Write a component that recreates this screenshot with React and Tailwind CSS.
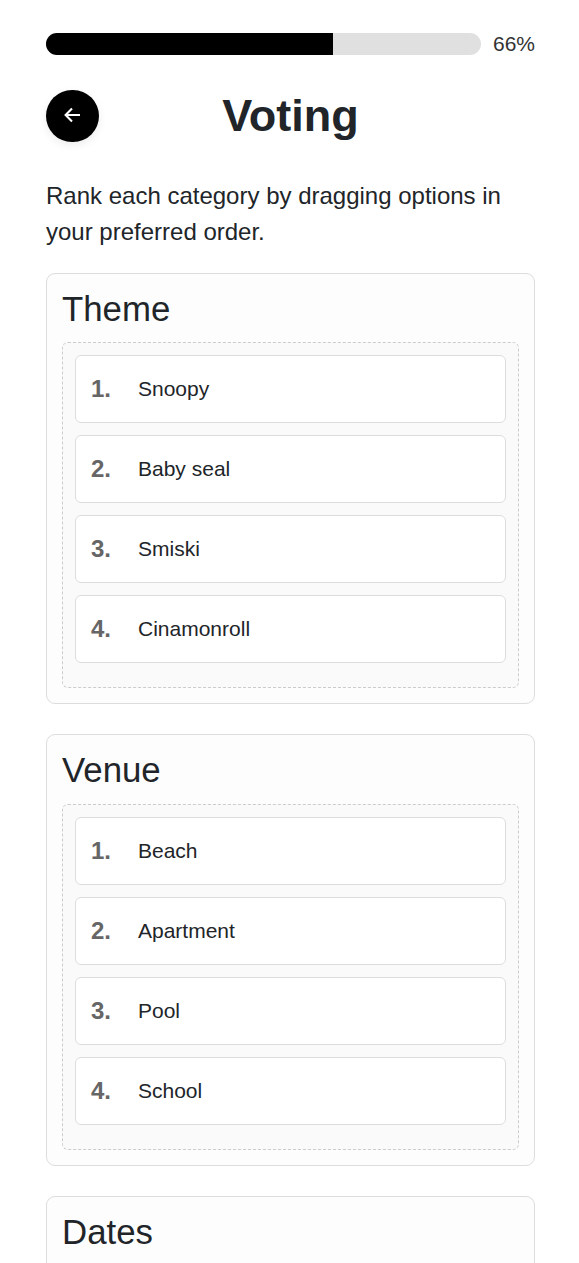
const Row = ({ n, label }) => (
  <li className="mb-3 flex h-[68px] items-center rounded-[6px] border border-[#dddddd] bg-white px-[15px]">
    <span className="w-[47px] text-[24px] font-bold text-[#666666]">{n}.</span>
    <span className="text-[21px] leading-[30px]">{label}</span>
  </li>
);

const Category = ({ title, options }) => (
  <section className="mb-[30px] rounded-[9px] border border-[#dddddd] bg-[#fdfdfd] p-[15px]">
    <h2 className="mb-3 h-[41.5px] text-[34.8px] leading-[40px]">{title}</h2>
    <ol className="min-h-[75px] rounded-[6px] border border-dashed border-[#cccccc] bg-[#fafafa] p-3">
      {options.map((o, i) => (
        <Row key={o} n={i + 1} label={o} />
      ))}
    </ol>
  </section>
);

export default function App() {
  return (
    <main className="h-[1263px] overflow-hidden bg-white pl-[46px] pr-[44px] pt-[33px] font-['Liberation_Sans',Arial,sans-serif] text-[#212529]">
      <div className="flex h-[22px] items-center">
        <div className="h-[22px] w-[435px] overflow-hidden rounded-full bg-[#e0e0e0]">
          <div className="h-full w-[66%] bg-black" />
        </div>
        <span className="ml-3 text-[21px] leading-[22px] text-[#333333]">66%</span>
      </div>
      <header className="mt-[35px] flex h-[52px] items-center">
        <button className="flex h-[52px] w-[53px] items-center justify-center rounded-full bg-black text-white shadow-[0_3px_8px_rgba(0,0,0,0.08)]">
          <svg className="mb-[2px] mr-[1px]" width="18" height="16" viewBox="0 0 18 16" fill="none" stroke="currentColor" strokeWidth="2.1">
            <path d="M17 8H2.5M9 1.6L2.6 8L9 14.4" />
          </svg>
        </button>
        <h1 className="mr-[53px] flex-1 text-center text-[45px] font-bold leading-[52px]">Voting</h1>
      </header>
      <p className="mb-[22.9px] mt-[36px] text-[24px] leading-[36px]">
        Rank each category by dragging options in your preferred order.
      </p>
      <Category title="Theme" options={["Snoopy", "Baby seal", "Smiski", "Cinamonroll"]} />
      <Category title="Venue" options={["Beach", "Apartment", "Pool", "School"]} />
      <Category title="Dates" options={[]} />
    </main>
  );
}
